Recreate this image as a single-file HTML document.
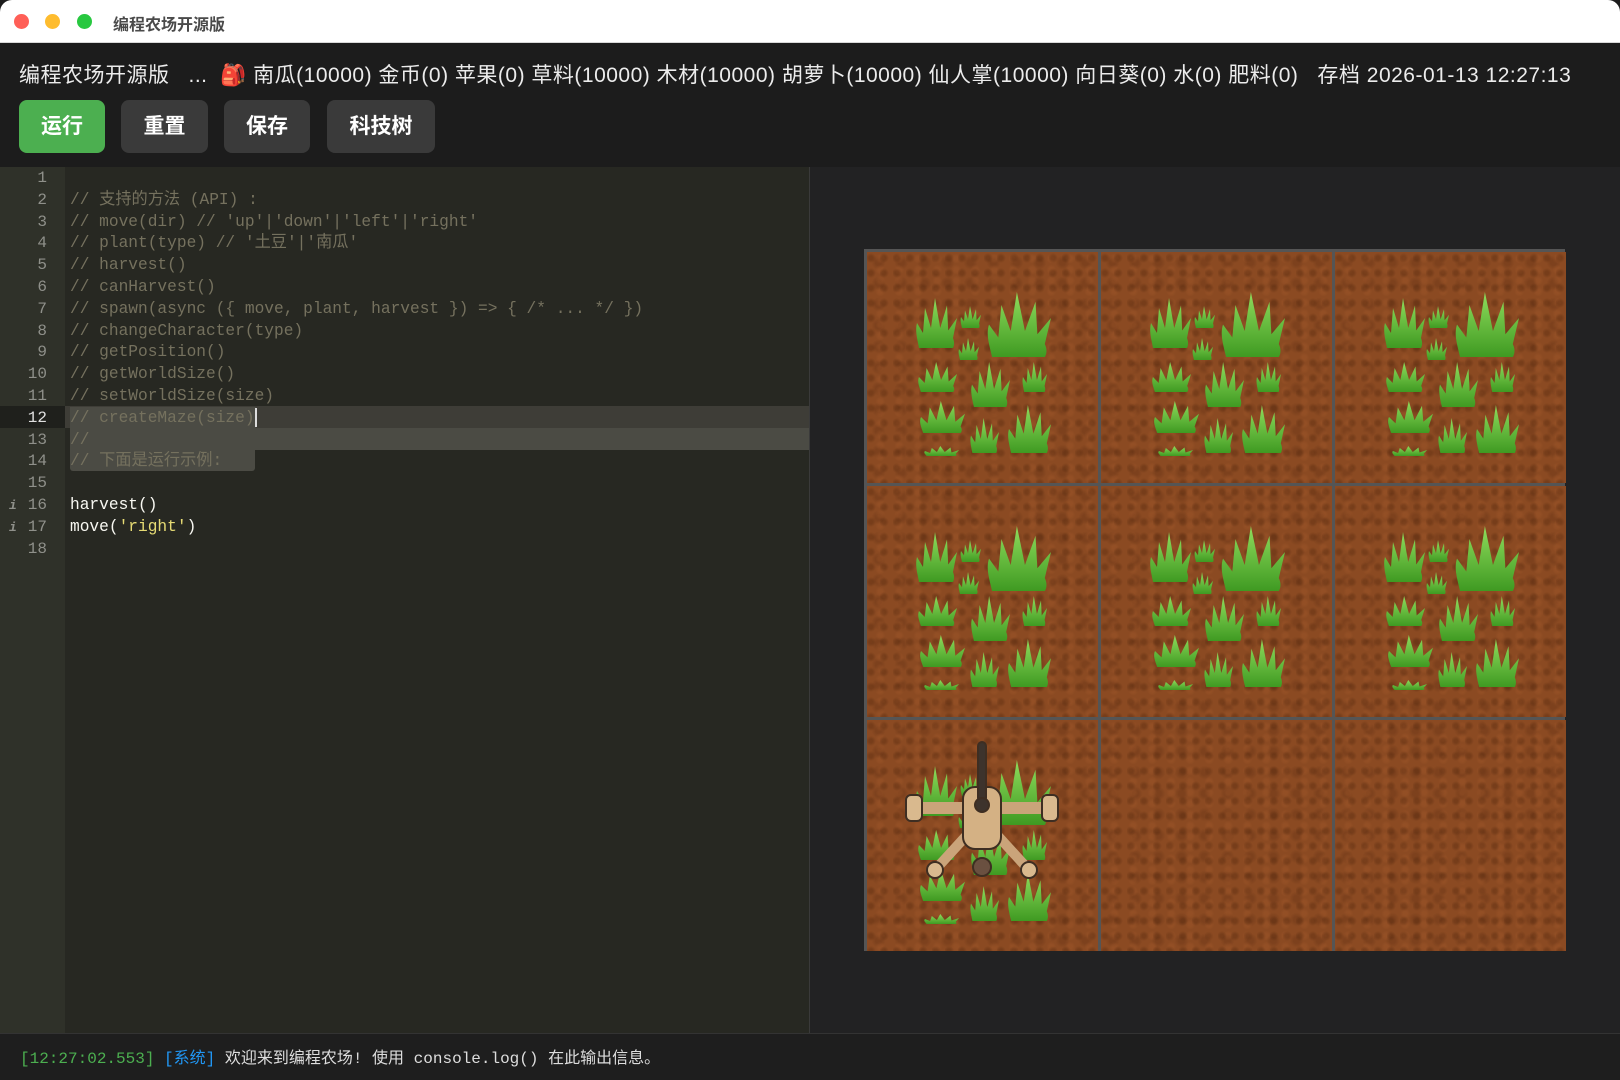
<!DOCTYPE html>
<html><head><meta charset="utf-8"><style>
*{margin:0;padding:0;box-sizing:border-box}
body{width:1620px;height:1080px;overflow:hidden;background:#1c1c1c;font-family:"Liberation Sans","Noto Sans CJK SC",sans-serif;position:relative}
.title{position:absolute;left:0;top:0;width:1620px;height:43px;background:#fff;border-radius:12px 12px 0 0;border-bottom:1px solid #d8d8d8}
.dot{position:absolute;top:14px;width:15px;height:15px;border-radius:50%}
.ttext{position:absolute;left:113px;top:11px;font-size:16px;font-weight:bold;color:#4a4a4a}
.status{position:absolute;left:19px;top:59px;font-size:21px;color:#ececec;white-space:nowrap;letter-spacing:0.5px}
.btn{position:absolute;top:100px;height:53px;border-radius:8px;background:#3a3a3a;color:#fff;font-size:21px;font-weight:bold;text-align:center;line-height:53px}
.editor{position:absolute;left:0;top:167px;width:809px;height:866px;background:#272822}
.gutter{position:absolute;left:0;top:0;width:65px;height:866px;background:#2f3129}
.divider{position:absolute;left:809px;top:167px;width:1px;height:866px;background:#3a3a3a}
.game{position:absolute;left:810px;top:167px;width:810px;height:866px;background:#222223}
.ln{position:absolute;left:0;width:47px;text-align:right;font-family:"Liberation Mono",monospace;font-size:16px;color:#8f908a;height:21.8px;line-height:21.8px}
.code{position:absolute;left:70px;font-family:"Liberation Mono","Noto Sans CJK SC",monospace;font-size:16.2px;color:#75715e;white-space:pre;height:21.8px;line-height:21.8px}
.console{position:absolute;left:0;top:1033px;width:1620px;height:47px;background:#1e1e1e;border-top:1px solid #333;font-family:"Liberation Mono","Noto Sans CJK SC",monospace;font-size:16px;color:#ddd;padding:10px 0 0 20px;white-space:pre}
.grid{position:absolute;left:864px;top:249px;width:701px;height:702px;background:#555;padding:3px}
.cell{position:absolute;width:231px;height:231px;background:#8b4a22;
background-image:radial-gradient(circle at 30% 40%,rgba(60,25,5,.25) 2px,transparent 5px),radial-gradient(circle at 70% 60%,rgba(180,100,50,.2) 2px,transparent 5px),radial-gradient(circle at 50% 50%,rgba(70,30,10,.2) 3px,transparent 7px);
background-size:13px 15px,19px 11px,23px 21px}
</style></head><body>
<div class="title">
<div class="dot" style="left:14px;background:#ff5f57"></div>
<div class="dot" style="left:45px;background:#febc2e"></div>
<div class="dot" style="left:77px;background:#28c840"></div>
<div class="ttext">编程农场开源版</div>
</div>
<div class="status">编程农场开源版&nbsp;&nbsp; ...&nbsp; <span style="color:#d32f2f">🎒</span> 南瓜(10000) 金币(0) 苹果(0) 草料(10000) 木材(10000) 胡萝卜(10000) 仙人掌(10000) 向日葵(0) 水(0) 肥料(0)&nbsp;&nbsp; 存档 2026-01-13 12:27:13</div>
<div class="btn" style="left:19px;width:86px;background:#4caf50">运行</div>
<div class="btn" style="left:121px;width:87px">重置</div>
<div class="btn" style="left:224px;width:86px">保存</div>
<div class="btn" style="left:327px;width:108px">科技树</div>

<div class="editor">
<div class="gutter"></div>
<div style="position:absolute;left:0;top:239px;width:65px;height:22px;background:#1f201c"></div>
<div style="position:absolute;left:65px;top:239px;width:744px;height:22px;background:#3e3d37"></div>
<div style="position:absolute;left:70px;top:240px;width:186px;height:21px;background:#4b4b44"></div>
<div style="position:absolute;left:70px;top:261px;width:739px;height:22px;background:#4b4b44"></div>
<div style="position:absolute;left:70px;top:283px;width:185px;height:21px;background:#4b4b44;border-radius:0 0 3px 3px"></div>
<div style="position:absolute;left:255px;top:241px;width:2px;height:19px;background:#ddd"></div>
</div>
<div id="lines"></div>
<div class="divider"></div>
<div class="game"></div>
<div class="grid">
<div class="cell" style="left:3px;top:3px"></div><div class="cell" style="left:237px;top:3px"></div><div class="cell" style="left:471px;top:3px"></div>
<div class="cell" style="left:3px;top:237px"></div><div class="cell" style="left:237px;top:237px"></div><div class="cell" style="left:471px;top:237px"></div>
<div class="cell" style="left:3px;top:471px"></div><div class="cell" style="left:237px;top:471px"></div><div class="cell" style="left:471px;top:471px"></div>
</div>
<svg style="position:absolute;left:0;top:0" width="1620" height="1080">
<defs>
<linearGradient id="g" x1="0" y1="1" x2="0" y2="0"><stop offset="0" stop-color="#3f9a22"/><stop offset="1" stop-color="#8fdc5c"/></linearGradient>
<path id="t" fill="url(#g)" d="M-0.45,0 C-0.5,-0.2 -0.55,-0.35 -0.5,-0.5 L-0.35,-0.3 L-0.3,-0.8 L-0.15,-0.4 L-0.05,-1 L0.08,-0.4 L0.25,-0.85 L0.28,-0.35 L0.5,-0.6 L0.4,-0.2 C0.45,-0.1 0.42,-0.03 0.4,0 Z"/>
<g id="c">
<use href="#t" transform="translate(72,98) scale(40,50)"/>
<use href="#t" transform="translate(106,78) scale(20,22)"/>
<use href="#t" transform="translate(104,110) scale(20,22)"/>
<use href="#t" transform="translate(155,107) scale(62,65)"/>
<use href="#t" transform="translate(73,142) scale(38,30)"/>
<use href="#t" transform="translate(126,157) scale(38,45)"/>
<use href="#t" transform="translate(170,142) scale(24,30)"/>
<use href="#t" transform="translate(78,183) scale(44,32)"/>
<use href="#t" transform="translate(120,203) scale(28,35)"/>
<use href="#t" transform="translate(165,203) scale(42,48)"/>
<use href="#t" transform="translate(77,206) scale(34,10)"/>
</g>
</defs>
<use href="#c" transform="translate(865,250)"/><use href="#c" transform="translate(1099,250)"/><use href="#c" transform="translate(1333,250)"/>
<use href="#c" transform="translate(865,484)"/><use href="#c" transform="translate(1099,484)"/><use href="#c" transform="translate(1333,484)"/>
<use href="#c" transform="translate(865,718)"/>
<g transform="translate(982,820)" stroke="#3e2e22" stroke-width="2">
<path d="M-60,-12 L60,-12" stroke="#caa47a" stroke-width="12"/>
<path d="M-15,15 L-47,50 M15,15 L47,50" stroke="#caa47a" stroke-width="10"/>
<rect x="-76" y="-25" width="16" height="26" rx="5" fill="#d9b98e"/>
<rect x="60" y="-25" width="16" height="26" rx="5" fill="#d9b98e"/>
<circle cx="-47" cy="50" r="8" fill="#d9b98e"/><circle cx="47" cy="50" r="8" fill="#d9b98e"/>
<rect x="-19" y="-33" width="38" height="62" rx="12" fill="#d4b184"/>
<circle cx="0" cy="47" r="9" fill="#6a5040"/>
<rect x="-4" y="-78" width="8" height="60" rx="4" fill="#3d332c"/>
<circle cx="0" cy="-15" r="7" fill="#3d332c"/>
</g>
</svg>
<div class="console"><span style="color:#4caf50">[12:27:02.553]</span> <span style="color:#2196f3">[系统]</span> 欢迎来到编程农场! 使用 console.log() 在此输出信息。</div>
<script>
var L=["","// 支持的方法 (API) :","// move(dir) // 'up'|'down'|'left'|'right'","// plant(type) // '土豆'|'南瓜'","// harvest()","// canHarvest()","// spawn(async ({ move, plant, harvest }) => { /* ... */ })","// changeCharacter(type)","// getPosition()","// getWorldSize()","// setWorldSize(size)","// createMaze(size)","//","// 下面是运行示例:","","harvest()","move(<span style=\"color:#e6db74\">'right'</span>)",""];
var h="";for(var i=0;i<18;i++){var y=168+i*21.8;var c=(i==15||i==16)?"color:#f8f8f2":"";var lc=i==11?"color:#e0e0e0":"";
h+='<div class="ln" style="top:'+y+'px;'+lc+'">'+(i==15||i==16?'<span style="position:absolute;left:9px;font-style:italic;font-weight:bold;font-size:13px">i</span>':'')+(i+1)+'</div><div class="code" style="top:'+y+'px;'+c+'">'+L[i]+'</div>';}
document.getElementById("lines").innerHTML=h;
</script>
</body></html>
